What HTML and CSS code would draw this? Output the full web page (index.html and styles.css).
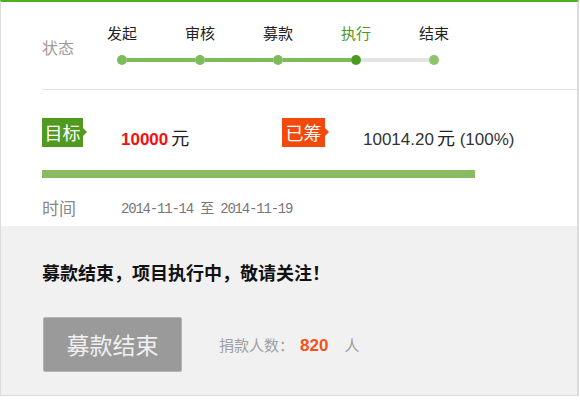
FILE: index.html
```html
<!DOCTYPE html>
<html lang="zh-CN">
<head>
<meta charset="utf-8">
<title>项目状态</title>
<link rel="stylesheet" href="styles.css">
</head>
<body>
<div class="card">
  <div class="main">
    <div class="status-row">
      <div class="row-label status-label">状态</div>
      <div class="steps">
        <div class="step-labels">
          <span class="step-name">发起</span>
          <span class="step-name">审核</span>
          <span class="step-name">募款</span>
          <span class="step-name current">执行</span>
          <span class="step-name">结束</span>
        </div>
        <div class="track">
          <span class="dot done"></span>
          <span class="seg done"></span>
          <span class="dot done"></span>
          <span class="seg done"></span>
          <span class="dot done"></span>
          <span class="seg done"></span>
          <span class="dot current"></span>
          <span class="seg"></span>
          <span class="dot last"></span>
        </div>
      </div>
    </div>
    <div class="amount-row">
      <div class="amount">
        <span class="badge badge-green">目标</span>
        <span class="value"><b class="target-num">10000</b><span class="unit">元</span></span>
      </div>
      <div class="amount">
        <span class="badge badge-red">已筹</span>
        <span class="value">10014.20<span class="unit">元</span> (100%)</span>
      </div>
    </div>
    <div class="progress"><div class="progress-fill" style="width:433px"></div></div>
    <div class="time-row">
      <span class="row-label time-label">时间</span>
      <span class="dates">2014-11-14 至 2014-11-19</span>
    </div>
  </div>
  <div class="foot">
    <div class="notice">募款结束，项目执行中，敬请关注！</div>
    <div class="action-row">
      <span class="btn">募款结束</span>
      <span class="donors">捐款人数：<b class="donor-num">820</b>人</span>
    </div>
  </div>
</div>
</body>
</html>
```

FILE: styles.css
```css
html, body {
  margin: 0;
  padding: 0;
  background: #fff;
}
body {
  font-family: "Liberation Sans", "Noto Sans CJK SC", sans-serif;
  color: #222;
}
.card {
  width: 576px;
  border: 1px solid #dcdcdc;
  border-top: 2px solid #4cb11c;
  border-right: 2px solid #dcdcdc;
}
.main {
  padding-left: 41px;
  background: #fff;
}
.status-row {
  display: flex;
  align-items: flex-start;
  border-bottom: 1px solid #e2e2e2;
  padding-top: 20px;
  padding-bottom: 24px;
}
.row-label {
  font-family: "Noto Sans CJK SC", sans-serif;
  font-size: 16px;
  color: #999;
  width: 41px;
  flex: none;
}
.status-label {
  margin-top: 14px;
  line-height: 22px;
  color: #a09a9e;
}
.steps {
  display: flex;
  flex-direction: column;
}
.step-labels {
  display: flex;
}
.step-name {
  width: 78px;
  text-align: center;
  font-family: "Noto Sans CJK SC", sans-serif;
  font-size: 15px;
  line-height: 21px;
  color: #222;
}
.step-name.current {
  color: #4a9a1e;
}
.track {
  display: flex;
  align-items: center;
  margin-top: 12px;
  padding-left: 34px;
  height: 10px;
}
.dot {
  width: 10px;
  height: 10px;
  border-radius: 50%;
  flex: none;
  background: #7dbb5b;
}
.dot.current {
  background: #4a9a24;
}
.dot.last {
  background: #8dc46c;
}
.seg {
  width: 68px;
  height: 4px;
  flex: none;
  background: #e4e4e4;
}
.seg.done {
  background: #7dbb5b;
}
.amount-row {
  display: grid;
  grid-template-columns: 240px 1fr;
  padding-top: 28px;
}
.amount {
  display: flex;
  align-items: flex-start;
  height: 29px;
}
.badge {
  position: relative;
  flex: none;
  height: 29px;
  line-height: 29px;
  font-family: "Noto Sans CJK SC", sans-serif;
  font-size: 18px;
  color: #fff;
  text-align: center;
  margin-right: 38px;
}
.badge-green {
  width: 41px;
  background: #4f9a1f;
}
.badge-red {
  width: 43px;
  background: #f24a0c;
}
.badge::after {
  content: "";
  position: absolute;
  right: -4px;
  top: 10px;
  border-top: 4px solid transparent;
  border-bottom: 4px solid transparent;
  border-left: 4px solid currentColor;
}
.badge-green::after {
  border-left-color: #4f9a1f;
}
.badge-red::after {
  border-left-color: #f24a0c;
}
.value {
  margin-top: 9px;
  height: 20px;
  font-size: 17px;
  line-height: 20px;
  color: #333;
  white-space: nowrap;
}
.unit {
  font-family: "Noto Sans CJK SC", sans-serif;
  font-size: 18px;
  margin-left: 3px;
  color: #222;
}
.target-num {
  color: #f50f0f;
  font-weight: bold;
}
.progress {
  margin-top: 23px;
  height: 8px;
}
.progress-fill {
  height: 8px;
  background: #8aba62;
}
.time-row {
  display: flex;
  align-items: center;
  margin-top: 17px;
  padding-bottom: 7px;
  height: 24px;
}
.time-label {
  font-size: 17px;
  color: #888;
}
.dates {
  margin-left: 38px;
  font-family: "Liberation Mono", "Noto Sans CJK SC", monospace;
  font-size: 14px;
  letter-spacing: -1.2px;
  color: #777;
}
.foot {
  background: #f1f1f1;
  padding: 34px 0 23px 41px;
}
.notice {
  font-family: "Noto Sans CJK SC", sans-serif;
  font-weight: bold;
  font-size: 18px;
  line-height: 24px;
  color: #111;
}
.action-row {
  display: flex;
  align-items: center;
  margin-top: 33px;
}
.btn {
  width: 137px;
  height: 53px;
  line-height: 53px;
  text-align: center;
  margin-left: 1px;
  background: #9a9a9a;
  border: 1px solid #b4b4b4;
  border-radius: 2px;
  font-family: "Noto Sans CJK SC", sans-serif;
  font-size: 23px;
  color: #f0f0f0;
}
.donors {
  margin-left: 37px;
  font-family: "Noto Sans CJK SC", sans-serif;
  font-size: 15px;
  color: #a0a0a0;
}
.donor-num {
  font-family: "Liberation Sans", sans-serif;
  font-size: 17px;
  font-weight: bold;
  color: #f4511c;
  margin: 0 16px 0 6px;
}
```
